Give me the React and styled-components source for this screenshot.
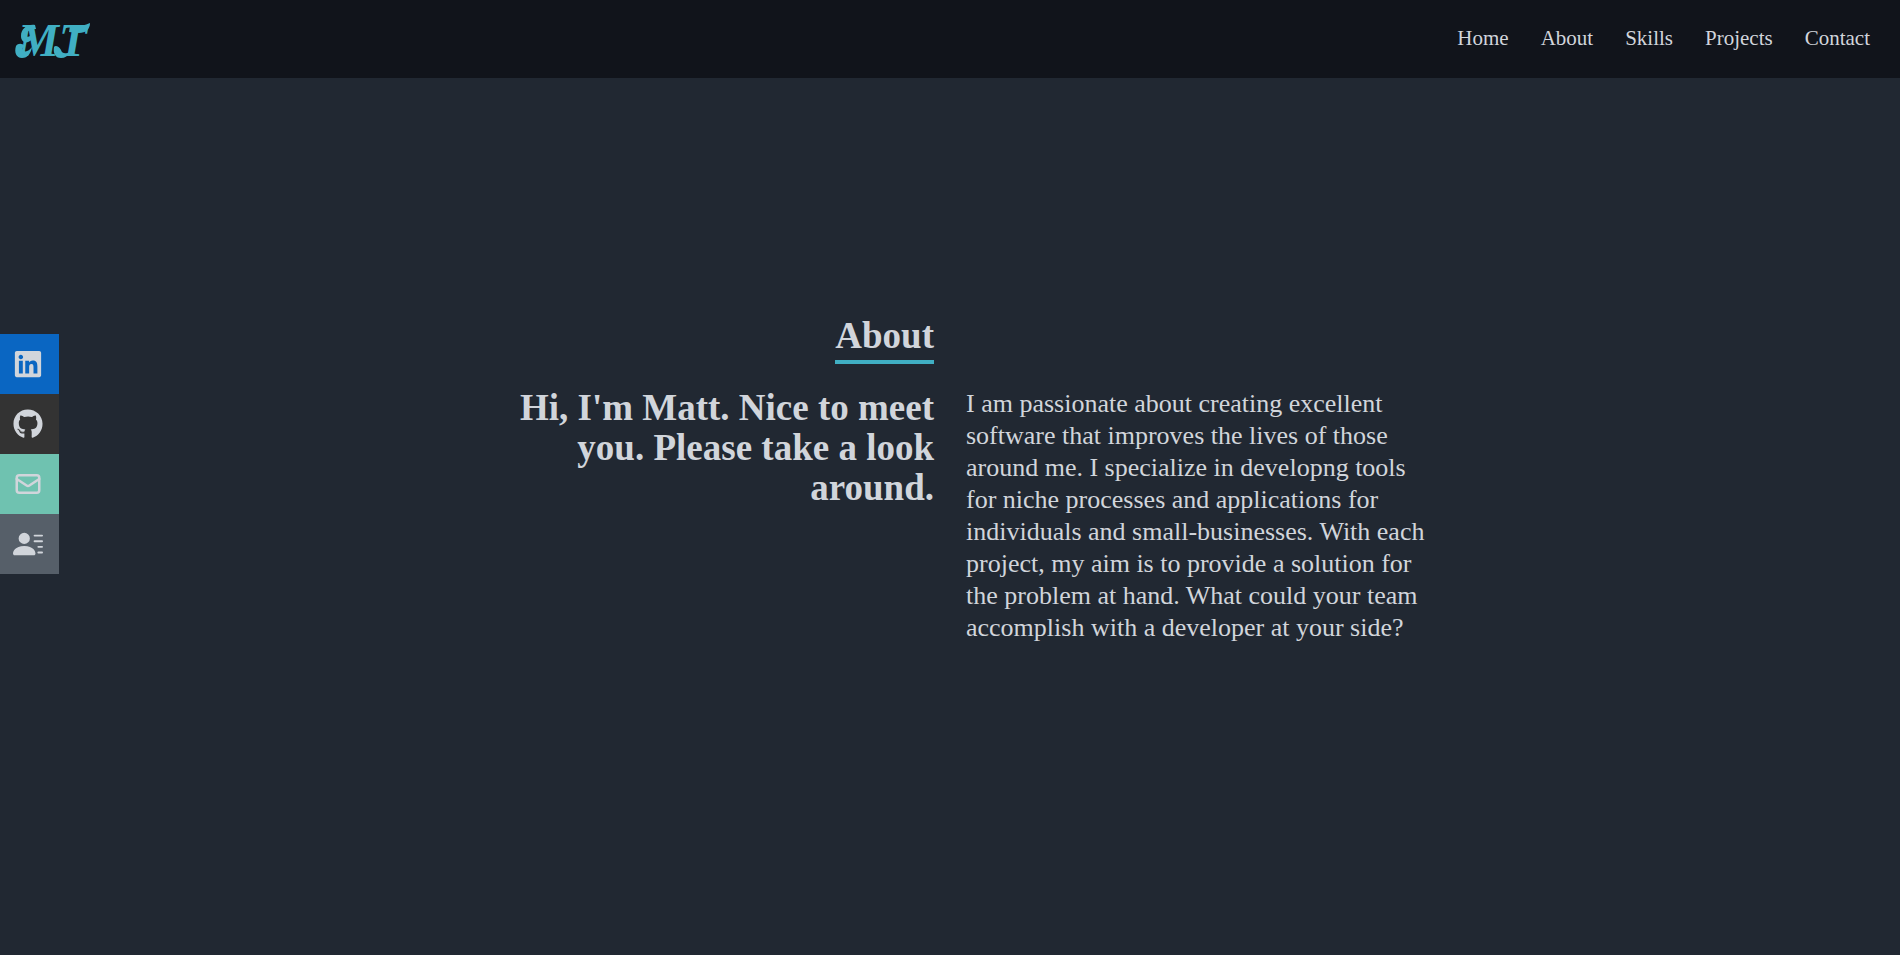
import React from "react";
import styled, { createGlobalStyle } from "styled-components";
import { FaLinkedin, FaGithub } from "react-icons/fa";
import { BsFillPersonLinesFill } from "react-icons/bs";

const Global = createGlobalStyle`
  * { box-sizing: border-box; }
  html { scrollbar-width: none; }
  body {
    margin: 0;
    background: #212832;
    color: #d1d5db;
    font-family: "Liberation Serif", serif;
  }
  h2, h3, p, ul { margin: 0; padding: 0; }
  a { color: inherit; text-decoration: none; }
`;

const Header = styled.header`
  position: fixed;
  inset: 0 0 auto 0;
  height: 78px;
  padding: 0 14px;
  display: flex;
  align-items: center;
  justify-content: space-between;
  background: #11141b;
`;

const Logo = styled.a`
  display: flex;

  svg {
    width: 84px;
    height: 60px;
    fill: #40afc3;
  }

  text {
    font-size: 46px;
    font-weight: 700;
    font-style: italic;
  }
`;

const NavList = styled.ul`
  display: flex;
  list-style: none;
  font-size: 21px;
  line-height: 24px;
  padding-bottom: 2px;
`;

const NavItem = styled.li`
  padding: 0 16px;
`;

const Social = styled.ul`
  position: fixed;
  left: 0;
  top: 35%;
  list-style: none;
  width: 59px;
`;

const SocialItem = styled.li`
  background: ${(p) => p.$color};
`;

const SocialLink = styled.a`
  display: flex;
  align-items: center;
  height: 60px;
  padding-left: 13px;
`;

const Section = styled.section`
  min-height: 100vh;
  padding-top: 4px;
  display: flex;
  flex-direction: column;
  align-items: center;
  justify-content: center;
`;

const Columns = styled.div`
  width: 100%;
  max-width: 1000px;
  padding: 0 16px;
  display: grid;
  grid-template-columns: 1fr 1fr;
  column-gap: 32px;
  row-gap: 24px;
`;

const TitleCell = styled.div`
  grid-column: 1;
  text-align: right;
`;

const Title = styled.h2`
  display: inline-block;
  font-size: 37px;
  line-height: 40px;
  padding-bottom: 4px;
  border-bottom: 4px solid #40afc3;
`;

const Greeting = styled.h3`
  grid-column: 1;
  text-align: right;
  font-size: 37px;
  line-height: 40px;
`;

const Bio = styled.p`
  font-size: 26px;
  line-height: 32px;
`;

function LogoMark() {
  return (
    <svg viewBox="0 -11 84 60" aria-hidden="true">
      <text x="4" y="36">MT</text>
      {/* curl at the foot of the M */}
      <path d="M2 26C0 32 2 38 8 38C14 38 17 33 18 27C15 31 11 33 9 30C8 28 9 27 11 26C8 23 4 23 2 26Z" />
      {/* loop at the shoulder of the M */}
      <path d="M21 5C13 4 7 9 7 16C7 22 12 24 16 21C19 19 20 15 18 13C17 16 14 18 12 16C11 13 14 9 22 9Z" />
      {/* flag at the end of the crossbar */}
      <path d="M56 6C64 7 69 6 76 3C76 9 72 13 65 13C61 13 58 12 55 12Z" />
      {/* curl at the foot of the T */}
      <path d="M40 27C39 33 41 38 47 38C51 38 54 36 56 32C52 34 48 34 47 30C45 26 41 25 40 27Z" />
    </svg>
  );
}

function MailIcon({ size }) {
  return (
    <svg
      width={size}
      height={size}
      viewBox="0 0 24 24"
      fill="none"
      stroke="currentColor"
      strokeWidth="2"
      strokeLinecap="round"
      strokeLinejoin="round"
    >
      <rect x="3" y="5" width="18" height="14" rx="2" />
      <path d="M3 8l7.89 5.26a2 2 0 0 0 2.22 0L21 8" />
    </svg>
  );
}

const links = ["Home", "About", "Skills", "Projects", "Contact"];

const socials = [
  { label: "LinkedIn", color: "#0a66c2", Icon: FaLinkedin },
  { label: "GitHub", color: "#333333", Icon: FaGithub },
  { label: "Email", color: "#6fc2b0", Icon: MailIcon },
  { label: "Resume", color: "#565f69", Icon: BsFillPersonLinesFill },
];

export default function App() {
  return (
    <>
      <Global />
      <Header>
        <Logo href="#home" aria-label="MT">
          <LogoMark />
        </Logo>
        <nav>
          <NavList>
            {links.map((name) => (
              <NavItem key={name}>
                <a href={`#${name.toLowerCase()}`}>{name}</a>
              </NavItem>
            ))}
          </NavList>
        </nav>
      </Header>
      <Social>
        {socials.map(({ label, color, Icon }) => (
          <SocialItem key={label} $color={color}>
            <SocialLink href="#contact" aria-label={label}>
              <Icon size={30} />
            </SocialLink>
          </SocialItem>
        ))}
      </Social>
      <main>
        <Section id="about">
          <Columns>
            <TitleCell>
              <Title>About</Title>
            </TitleCell>
            <Greeting>Hi, I'm Matt. Nice to meet you. Please take a look around.</Greeting>
            <Bio>
              I am passionate about creating excellent software that improves the lives of those
              around me. I specialize in developng tools for niche processes and applications for
              individuals and small-businesses. With each project, my aim is to provide a solution
              for the problem at hand. What could your team accomplish with a developer at your
              side?
            </Bio>
          </Columns>
        </Section>
      </main>
    </>
  );
}
